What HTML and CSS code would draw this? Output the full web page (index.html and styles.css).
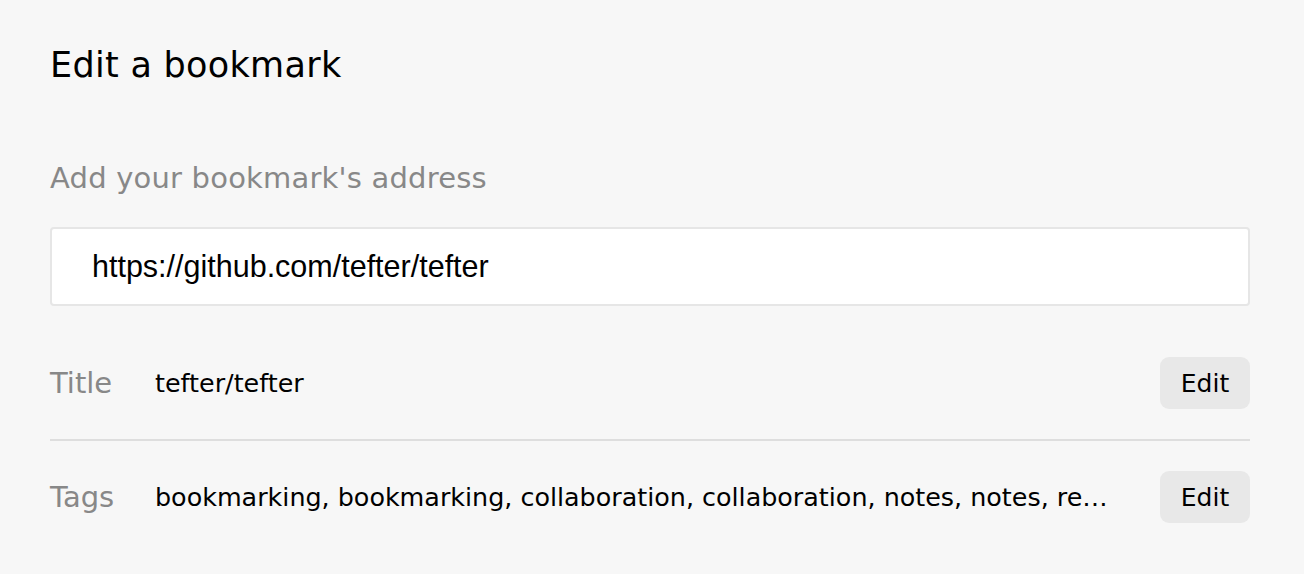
FILE: index.html
```html
<!DOCTYPE html>
<html lang="en">
<head>
<meta charset="utf-8">
<title>Edit a bookmark</title>
<link rel="stylesheet" href="styles.css">
</head>
<body>
<main class="page">
  <h1 class="heading">Edit a bookmark</h1>
  <label class="field-label" for="url">Add your bookmark's address</label>
  <div class="url-box" id="url">https://github.com/tefter/tefter</div>
  <div class="row row-divided">
    <span class="row-label">Title</span>
    <span class="row-value">tefter/tefter</span>
    <button class="edit-btn">Edit</button>
  </div>
  <div class="row">
    <span class="row-label">Tags</span>
    <span class="row-value">bookmarking, bookmarking, collaboration, collaboration, notes, notes, reading, reading, tefter</span>
    <button class="edit-btn">Edit</button>
  </div>
</main>
</body>
</html>
```
FILE: styles.css
```css
html, body {
  margin: 0;
  background: #f7f7f7;
}
body {
  font-family: "DejaVu Sans", "Open Sans", sans-serif;
  color: #000;
}
.page {
  width: 1200px;
  padding: 40px 50px 0 50px;
  display: flex;
  flex-direction: column;
}
.heading {
  margin: 0;
  font-size: 35px;
  font-weight: 400;
  line-height: 50px;
  letter-spacing: 0.3px;
}
.field-label {
  margin-top: 68px;
  font-size: 29px;
  color: #888;
  line-height: 40px;
  letter-spacing: 0.2px;
}
.url-box {
  margin-top: 29px;
  height: 79px;
  box-sizing: border-box;
  background: #fff;
  border: 2px solid #e6e6e6;
  border-radius: 4px;
  padding: 0 40px;
  display: flex;
  align-items: center;
  font-family: "Liberation Sans", Arial, sans-serif;
  font-size: 30.5px;
}
.row {
  display: flex;
  align-items: center;
  padding: 30px 0;
}
.row-divided {
  margin-top: 21px;
  border-bottom: 2px solid #dedede;
}
.row-label {
  width: 105px;
  flex: none;
  font-size: 29px;
  color: #888;
}
.row-value {
  flex: 1;
  min-width: 0;
  font-size: 25.4px;
  white-space: nowrap;
  overflow: hidden;
  text-overflow: ellipsis;
  margin-right: 50px;
}
.edit-btn {
  flex: none;
  width: 90px;
  height: 52px;
  border: none;
  border-radius: 9px;
  background: #e8e8e8;
  font-family: inherit;
  font-size: 25px;
  color: #000;
  padding: 0;
}
```
